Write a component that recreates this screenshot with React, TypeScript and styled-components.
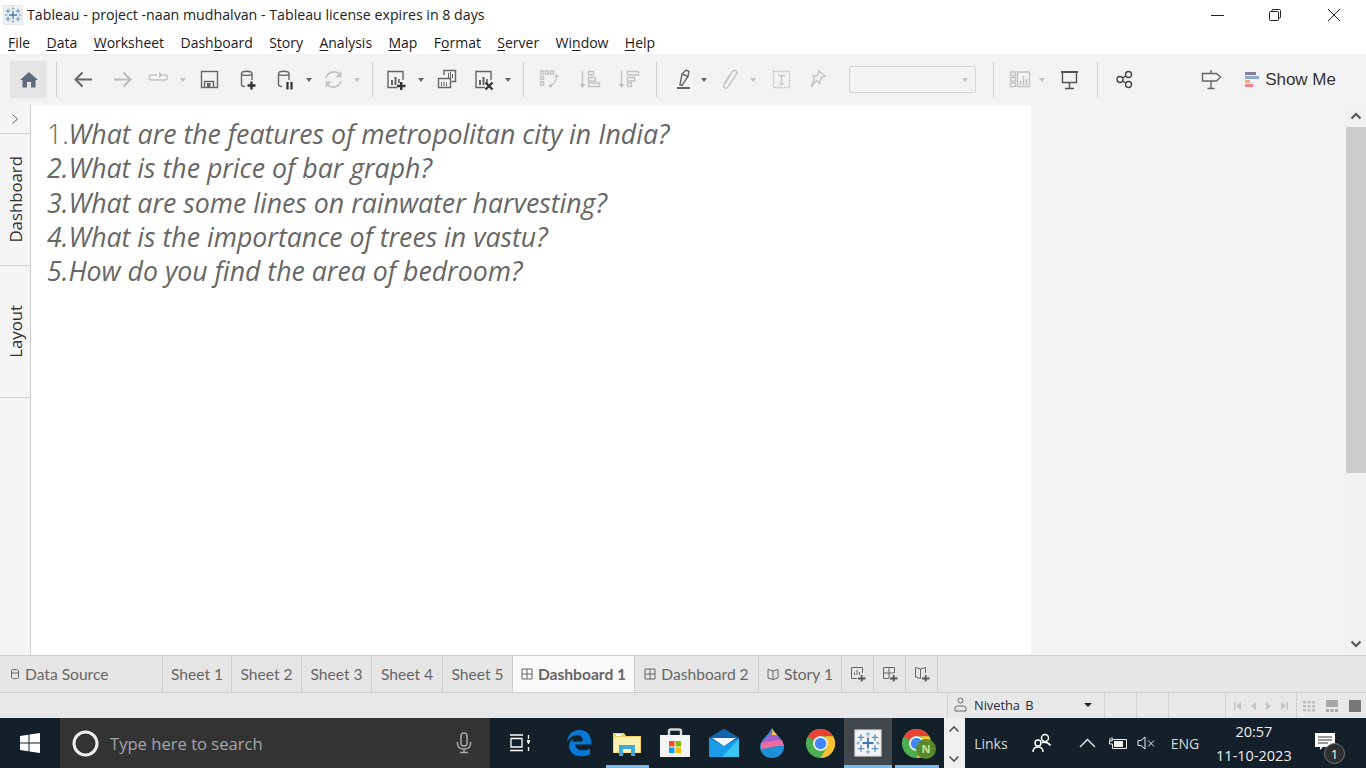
import { createGlobalStyle, styled } from "styled-components";

const Global = createGlobalStyle`
  html, body { margin: 0; padding: 0; height: 100%; overflow: hidden; }
  body { font-family: "Open Sans", "Liberation Sans", sans-serif; background: #fff; }
  * { box-sizing: border-box; }
  svg { display: block; flex: none; }
`;

const Page = styled.div`
  width: 1366px;
  height: 768px;
  display: flex;
  flex-direction: column;
`;

/* title + menu */
const TitleBar = styled.div`
  height: 30px;
  display: flex;
  align-items: center;
  padding-left: 3px;
  background: #fff;
`;
const TitleText = styled.div`
  margin: -2px 0 0 4px;
  font-size: 14.2px;
  color: #222;
  white-space: nowrap;
`;
const WinButtons = styled.div`
  margin-left: auto;
  display: flex;
  padding-right: 3px;
`;
const WinButton = styled.div`
  width: 58.5px;
  height: 30px;
  display: flex;
  align-items: center;
  justify-content: center;
`;
const MenuBar = styled.div`
  height: 24px;
  display: flex;
  gap: 16.4px;
  padding-left: 8px;
  align-items: center;
  background: #fff;
`;
const MenuItem = styled.div`
  font-size: 14px;
  color: #1a1a1a;
  white-space: nowrap;
  u { text-underline-offset: 2px; }
`;

/* toolbar */
const Toolbar = styled.div`
  height: 51px;
  display: flex;
  align-items: center;
  padding: 0 30px 0 10px;
  background: #f3f3f3;
`;
const HomeButton = styled.div`
  width: 37px;
  height: 37px;
  background: #e5e5e5;
  display: flex;
  align-items: center;
  justify-content: center;
`;
const Sep = styled.div<{ $ml?: number; $mr?: number }>`
  width: 1px;
  height: 35px;
  background: #cfcfcf;
  flex: none;
  margin-left: ${(p) => p.$ml ?? 0}px;
  margin-right: ${(p) => p.$mr ?? 0}px;
`;
const Slot = styled.div<{ $w: number }>`
  width: ${(p) => p.$w}px;
  height: 37px;
  flex: none;
  display: flex;
  align-items: center;
  justify-content: center;
`;
const Caret = styled.span<{ $off?: boolean }>`
  display: block;
  flex: none;
  width: 0;
  height: 0;
  border-left: 3px solid transparent;
  border-right: 3px solid transparent;
  border-top: 4px solid ${(p) => (p.$off ? "#c2c2c2" : "#666")};
`;
const Dropdown = styled.div`
  width: 127px;
  height: 27px;
  margin-left: 24px;
  flex: none;
  border: 1px solid #d4d4d4;
  border-radius: 2px;
  background: #f3f3f3;
  display: flex;
  align-items: center;
  justify-content: flex-end;
  padding-right: 7px;
`;
const ToolbarRight = styled.div`
  margin-left: auto;
  display: flex;
  align-items: center;
`;
const ShowMe = styled.div`
  display: flex;
  align-items: center;
  gap: 6px;
  margin-left: 19px;
  font-size: 17px;
  color: #333;
  font-family: "Liberation Sans", sans-serif;
`;

/* main */
const Main = styled.div`
  flex: 1;
  min-height: 0;
  display: flex;
`;
const Rail = styled.div`
  width: 31px;
  flex: none;
  background: #f5f5f5;
  border-right: 1px solid #cdcdcd;
  display: flex;
  flex-direction: column;
`;
const RailToggle = styled.div`
  height: 29px;
  border-bottom: 1px solid #d4d4d4;
  display: flex;
  align-items: center;
  justify-content: center;
`;
const RailTab = styled.div<{ $h: number }>`
  height: ${(p) => p.$h}px;
  border-bottom: 1px solid #d4d4d4;
  display: flex;
  align-items: center;
  justify-content: center;
  span {
    writing-mode: vertical-rl;
    transform: rotate(180deg);
    font-size: 16.8px;
    color: #333;
  }
`;
const Canvas = styled.div`
  width: 1000px;
  flex: none;
  background: #fff;
  padding: 12px 0 0 16px;
`;
const Question = styled.div`
  height: 34.3px;
  line-height: 34.3px;
  font-family: "Open Sans", sans-serif;
  font-style: italic;
  font-size: 26.7px;
  color: #666;
  white-space: nowrap;
  span { font-style: normal; font-weight: 300; }
`;
const SidePanel = styled.div`
  flex: 1;
  background: #f3f3f3;
`;
const Scrollbar = styled.div`
  width: 20px;
  flex: none;
  background: #f1f1f1;
  display: flex;
  flex-direction: column;
`;
const ScrollButton = styled.div`
  height: 22px;
  flex: none;
  display: flex;
  align-items: center;
  justify-content: center;
`;
const ScrollThumb = styled.div`
  height: 346px;
  background: #cdcdcd;
`;
const ScrollTrack = styled.div`
  flex: 1;
`;

/* tabs */
const TabRow = styled.div`
  height: 38px;
  flex: none;
  display: flex;
  background: #e6e6e6;
  border-top: 1px solid #cfcfcf;
  border-bottom: 1px solid #cfcfcf;
`;
const Tab = styled.div<{ $w: number; $active?: boolean }>`
  width: ${(p) => p.$w}px;
  flex: none;
  display: flex;
  align-items: center;
  justify-content: ${(p) => (p.$w > 150 ? "flex-start" : "center")};
  gap: 5px;
  padding-left: ${(p) => (p.$w > 150 ? 10 : 0)}px;
  font-family: "Lato", "Open Sans", sans-serif;
  font-size: 15.6px;
  font-weight: ${(p) => (p.$active ? 700 : 400)};
  color: #666;
  background: ${(p) => (p.$active ? "#fafafa" : "transparent")};
  border-right: 1px solid #cfcfcf;
  white-space: nowrap;
`;

/* status */
const StatusBar = styled.div`
  height: 25px;
  flex: none;
  display: flex;
  justify-content: flex-end;
  background: #e8e8e8;
`;
const StatusCell = styled.div<{ $w: number }>`
  width: ${(p) => p.$w}px;
  flex: none;
  display: flex;
  align-items: center;
  justify-content: center;
  border-left: 1px solid #d2d2d2;
`;
const UserCell = styled(StatusCell)`
  justify-content: flex-start;
  padding: 0 12px 2px 6px;
  font-size: 12.8px;
  color: #1f2a44;
  gap: 7px;
  word-spacing: 2px;
`;
const UserCaret = styled.span`
  margin-left: auto;
  width: 0;
  height: 0;
  border-left: 4px solid transparent;
  border-right: 4px solid transparent;
  border-top: 4px solid #222;
`;
const ViewIcons = styled.div`
  display: flex;
  gap: 11px;
  align-items: center;
`;

/* taskbar */
const Taskbar = styled.div`
  height: 50px;
  flex: none;
  display: flex;
  background: #13202a;
  color: #fff;
  position: relative;
`;
const StartButton = styled.div`
  width: 60px;
  display: flex;
  align-items: center;
  justify-content: center;
`;
const SearchBox = styled.div`
  width: 430px;
  background: #333;
  display: flex;
  align-items: center;
  padding: 0 18px 0 12px;
  color: #a6a6a6;
  font-size: 16.6px;
  gap: 11px;
`;
const MicWrap = styled.div`
  margin-left: auto;
`;
const TaskView = styled.div`
  width: 65px;
  display: flex;
  align-items: center;
  justify-content: flex-start;
  padding-left: 19px;
`;
const AppSlot = styled.div<{ $active?: boolean; $bar?: string }>`
  width: 48.2px;
  flex: none;
  position: relative;
  display: flex;
  align-items: center;
  justify-content: center;
  background: ${(p) => (p.$active ? "#3f474c" : "transparent")};
  &::after {
    content: "";
    display: ${(p) => (p.$bar ? "block" : "none")};
    position: absolute;
    left: ${(p) => (p.$active ? 0 : 3)}px;
    right: ${(p) => (p.$active ? 0 : 2)}px;
    bottom: 0;
    height: 3px;
    background: ${(p) => p.$bar};
  }
`;
const TrayScroll = styled.div`
  width: 21px;
  margin-left: 3.4px;
  flex: none;
  background: #f0f0f0;
  display: flex;
  flex-direction: column;
  align-items: center;
  justify-content: space-between;
  padding: 7px 0 5px;
`;
const Tray = styled.div<{ $w: number }>`
  width: ${(p) => p.$w}px;
  flex: none;
  display: flex;
  align-items: center;
  justify-content: center;
  font-size: 14px;
  color: #d8d8d8;
`;
const Clock = styled.div`
  width: 92px;
  margin-left: 5px;
  flex: none;
  display: flex;
  flex-direction: column;
  align-items: center;
  justify-content: center;
  gap: 5px;
  font-size: 14.5px;
  line-height: 19px;
  color: #eee;
`;
const Badge = styled.div`
  position: absolute;
  left: 24px;
  top: 25px;
  width: 21px;
  height: 21px;
  border-radius: 50%;
  background: #2f2f2f;
  border: 1px solid #777;
  color: #fff;
  font-size: 13px;
  display: flex;
  align-items: center;
  justify-content: center;
`;
const NotifWrap = styled.div`
  position: relative;
  width: 60px;
  display: flex;
  align-items: center;
  padding: 0 0 3px 15px;
`;

const ic = { fill: "none", stroke: "#666", strokeWidth: 1.4 };
const off = { fill: "none", stroke: "#c4c4c4", strokeWidth: 1.4 };

const S = ({ children }: { children: React.ReactNode }) => (
  <svg width="25" height="25" viewBox="0 0 25 25">
    {children}
  </svg>
);

const Cylinder = () => <path {...ic} d="M5.5 6.5C5.5 3.5 16 3.5 16 6.5V13M5.5 6.5C5.5 9 16 9 16 6.5M5.5 6.5V17.5C5.5 19 7 19.5 9 19.5" />;
const BarsBox = ({ x = 4 }: { x?: number }) => (
  <g>
    <path {...ic} d={`M${x + 9} 20.5H${x}V4.5H${x + 15}V13`} />
    <path fill="#666" d={`M${x + 3} 13h2v5h-2zM${x + 6.5} 10h2v8h-2zM${x + 10} 12h1.8v4h-1.8z`} />
  </g>
);

const TableauLogo = ({ size, frame }: { size: number; frame?: boolean }) => {
  const plus = (x: number, y: number, r: number, c: string, w: number) => (
    <path key={`${x}-${y}`} stroke={c} strokeWidth={w} d={`M${x - r} ${y}H${x + r}M${x} ${y - r}V${y + r}`} />
  );
  return (
    <svg width={size} height={size} viewBox="0 0 30 30">
      <rect x="1" y="1" width="28" height="28" fill={frame ? "#f4f4f4" : "#f1f1f1"} stroke="#ddd" />
      {plus(15, 15, 6, "#3f78b0", 2)}
      {plus(7.5, 9, 3.5, "#5b93c7", 1.5)}
      {plus(22.5, 9, 3.5, "#5b93c7", 1.5)}
      {plus(7.5, 21, 3.5, "#5b93c7", 1.5)}
      {plus(22.5, 21, 3.5, "#5b93c7", 1.5)}
      {plus(15, 5.5, 2.5, "#7fa9cf", 1.2)}
      {plus(15, 24.5, 2.5, "#7fa9cf", 1.2)}
      {plus(4.5, 15, 2, "#7fa9cf", 1.2)}
      {plus(25.5, 15, 2, "#7fa9cf", 1.2)}
    </svg>
  );
};

const Chrome = () => (
  <svg width="31" height="31" viewBox="0 0 32 32">
    <circle cx="16" cy="16" r="15" fill="#4caf50" />
    <path fill="#ea4335" d="M3 8.5A15 15 0 0 1 29 8.5L16 8.5C12 8.5 9.5 11 9 13.5Z" />
    <path fill="#fbc02d" d="M29 8.5A15 15 0 0 1 16 31L23 19C24 16 23 11 20 8.5Z" />
    <circle cx="16" cy="16" r="7.6" fill="#fff" />
    <circle cx="16" cy="16" r="6" fill="#4285f4" />
  </svg>
);

export default function App() {
  return (
    <Page>
      <Global />
      <TitleBar>
        <TableauLogo size={20} />
        <TitleText>Tableau - project -naan mudhalvan - Tableau license expires in 8 days</TitleText>
        <WinButtons>
          <WinButton>
            <svg width="14" height="14" viewBox="0 0 14 14"><path stroke="#222" d="M1 7.5H14" /></svg>
          </WinButton>
          <WinButton>
            <svg width="14" height="14" viewBox="0 0 14 14" fill="none" stroke="#222"><rect x="1.5" y="3.5" width="9" height="9" rx="1" /><path d="M4 3.5V2.5Q4 1.5 5 1.5H11.5Q12.5 1.5 12.5 2.5V9Q12.5 10 11.5 10H10.5" /></svg>
          </WinButton>
          <WinButton>
            <svg width="14" height="14" viewBox="0 0 14 14" stroke="#222"><path d="M1 1L13 13M13 1L1 13" /></svg>
          </WinButton>
        </WinButtons>
      </TitleBar>
      <MenuBar>
        <MenuItem><u>F</u>ile</MenuItem>
        <MenuItem><u>D</u>ata</MenuItem>
        <MenuItem><u>W</u>orksheet</MenuItem>
        <MenuItem>Dash<u>b</u>oard</MenuItem>
        <MenuItem>S<u>t</u>ory</MenuItem>
        <MenuItem><u>A</u>nalysis</MenuItem>
        <MenuItem><u>M</u>ap</MenuItem>
        <MenuItem>F<u>o</u>rmat</MenuItem>
        <MenuItem><u>S</u>erver</MenuItem>
        <MenuItem>Wi<u>n</u>dow</MenuItem>
        <MenuItem><u>H</u>elp</MenuItem>
      </MenuBar>

      <Toolbar>
        <HomeButton>
          <svg width="18" height="16" viewBox="0 0 18 16"><path fill="#5d6b7b" d="M9 0L18 8H15.5V15.5H11V10H7V15.5H2.5V8H0Z" /></svg>
        </HomeButton>
        <Sep $ml={9} />
        <Slot $w={52}>
          <S><path fill="none" stroke="#666" strokeWidth="2" d="M21 12.5H5M11.5 5.5L4.5 12.5L11.5 19.5" /></S>
        </Slot>
        <Slot $w={26}>
          <S><path fill="none" stroke="#bdbdbd" strokeWidth="2" d="M4 12.5H20M13.5 5.5L20.5 12.5L13.5 19.5" /></S>
        </Slot>
        <Slot $w={46}>
          <S><path {...off} d="M11 8H6Q3 8 3 10.5T6 13H19Q21.5 13 21.5 10.5T19 8H17" /><path fill="#c4c4c4" d="M13 5l4 3-4 3z" /></S>
        </Slot>
        <Slot $w={4}><Caret $off /></Slot>
        <Slot $w={48}>
          <S><rect {...ic} x="4.5" y="4.5" width="16" height="16" /><path {...ic} d="M7.5 20.5V14.5H16.5V20.5" /><rect x="10" y="16" width="3.5" height="4" fill="#666" /></S>
        </Slot>
        <Slot $w={30}>
          <S><Cylinder /><path stroke="#333" strokeWidth="2.4" d="M11.5 18.5H19.5M15.5 14.5V22.5" /></S>
        </Slot>
        <Slot $w={44}>
          <S><Cylinder /><path stroke="#333" strokeWidth="2.2" d="M14.5 15V22.5M18.5 15V22.5" /></S>
        </Slot>
        <Slot $w={4}><Caret /></Slot>
        <Slot $w={44}>
          <S><path {...off} strokeWidth="1.8" d="M5 11A8 8 0 0 1 19 8M20 14A8 8 0 0 1 6 17" /><path fill="#c4c4c4" d="M20.5 4V10.5H14.5ZM4.5 21V14.5H10.5Z" /></S>
        </Slot>
        <Slot $w={4}><Caret $off /></Slot>
        <Sep $ml={13} />
        <Slot $w={46}>
          <S><BarsBox /><path stroke="#333" strokeWidth="2.4" d="M13 19H21.5M17.2 15V23" /></S>
        </Slot>
        <Slot $w={4}><Caret /></Slot>
        <Slot $w={48}>
          <S><path {...ic} d="M9 8V3.5H20.5V14.5H16.5" /><path {...ic} d="M3.5 11.5H15.5V20.5H3.5Z" /><path stroke="#666" d="M13.5 6V11M15.5 5V11M17.5 7V11M6.5 15V19M9 14.5V19M11.5 15.5V19" /></S>
        </Slot>
        <Slot $w={26}>
          <S><BarsBox /><path stroke="#333" strokeWidth="2.2" d="M13.5 15.5L20.5 22.5M20.5 15.5L13.5 22.5" /></S>
        </Slot>
        <Slot $w={22}><Caret /></Slot>
        <Sep $ml={4} />
        <Slot $w={50}>
          <S><path {...off} d="M3.5 4h3v3h-3zM8.5 4h3v3h-3zM13.5 4h3v3h-3zM3.5 9.5h3v3h-3zM3.5 15h3v3h-3z" /><path {...off} d="M19.5 9Q19.5 16 12.5 19" /><path fill="#c4c4c4" d="M17 10l2.5-3 2.5 3zM14.5 16.5l-3.5 2.5 3.5 2z" /></S>
        </Slot>
        <Slot $w={30}>
          <S><path stroke="#c0c0c0" strokeWidth="1.4" d="M5.5 4V19" /><path fill="#c0c0c0" d="M2.5 17H8.5L5.5 21Z" /><path {...off} d="M11.5 4.5h5v3.5h-5zM11.5 10.5h7v3.5h-7zM11.5 16h11v3.5h-11z" /></S>
        </Slot>
        <Slot $w={48}>
          <S><path stroke="#c0c0c0" strokeWidth="1.4" d="M5.5 4V19" /><path fill="#c0c0c0" d="M2.5 17H8.5L5.5 21Z" /><path {...off} d="M11.5 4.5h11v3.5h-11zM11.5 10.5h7v3.5h-7zM11.5 16h4v3.5h-4z" /></S>
        </Slot>
        <Sep $ml={4} $mr={8} />
        <Slot $w={38}>
          <S><path {...ic} d="M8 18L10 7L14 3L17 4.5L16 9.5L10 18.5Z" /><path {...ic} d="M10 7L16 9.5" /><rect x="5" y="20" width="13" height="2" fill="#666" /></S>
        </Slot>
        <Slot $w={2}><Caret /></Slot>
        <Slot $w={48}>
          <S><path {...off} d="M8 17L15 5Q17 2.5 19 4T18.5 8.5L11 20Q9 22 7.5 21T7 17L13 7.5" /></S>
        </Slot>
        <Slot $w={0}><Caret $off /></Slot>
        <Slot $w={56}>
          <S><rect {...off} strokeDasharray="2 1" x="4.5" y="4.5" width="16" height="16" /><path {...off} d="M9 8.5H16M12.5 8.5V17M10.5 17H14.5" /></S>
        </Slot>
        <Slot $w={16}>
          <S><path {...off} d="M14 4L20 9L16 11L14.5 16.5L11.5 13.5L6 20L9.5 11.5L8 9L12.5 8.5Z" /></S>
        </Slot>
        <Dropdown><Caret $off /></Dropdown>
        <Sep $ml={17} $mr={6} />
        <Slot $w={40}>
          <S><path {...off} d="M2.5 5h5v3.5h-5zM2.5 10.5h5v3.5h-5zM2.5 16h5v3.5h-5zM9.5 5H21.5V19.5H9.5Z" /><path stroke="#c4c4c4" strokeWidth="1.6" d="M12.5 18V14M15.5 18V9M18.5 18V12" /></S>
        </Slot>
        <Slot $w={4}><Caret $off /></Slot>
        <Slot $w={50}>
          <S><path stroke="#555" strokeWidth="2" d="M4 5H21" /><path {...ic} stroke="#555" d="M5.5 5V15.5H19.5V5M12.5 15.5V21.5M8 21.5H17" /></S>
        </Slot>
        <Sep $ml={3} />
        <Slot $w={52}>
          <S><g {...ic} stroke="#444"><circle cx="8" cy="12.5" r="3" /><circle cx="16.5" cy="7.5" r="3" /><circle cx="16.5" cy="17.5" r="3" /><path d="M10.5 11L14 9M10.5 14L14 16" /></g></S>
        </Slot>
        <ToolbarRight>
          <Slot $w={30}>
            <S><path {...ic} d="M3.5 6.5H17.5L21.5 10L17.5 14H3.5ZM12 3V6.5M12 14V21.5M8.5 21.5H15.5" /></S>
          </Slot>
          <ShowMe>
            <svg width="14" height="16" viewBox="0 0 14 16">
              <rect width="11" height="3" fill="#8a7aa0" />
              <rect y="4" width="14" height="3" fill="#8aabd0" />
              <rect y="8" width="5" height="3" fill="#f0b080" />
              <rect y="12" width="8" height="3" fill="#f28090" />
            </svg>
            Show Me
          </ShowMe>
        </ToolbarRight>
      </Toolbar>

      <Main>
        <Rail>
          <RailToggle>
            <svg width="10" height="12" viewBox="0 0 10 12"><path fill="none" stroke="#666" d="M2.5 1.5L7.5 6L2.5 10.5" /></svg>
          </RailToggle>
          <RailTab $h={132}><span>Dashboard</span></RailTab>
          <RailTab $h={132}><span>Layout</span></RailTab>
        </Rail>
        <Canvas>
          <Question><span>1.</span>What are the features of metropolitan city in India?</Question>
          <Question>2.What is the price of bar graph?</Question>
          <Question>3.What are some lines on rainwater harvesting?</Question>
          <Question>4.What is the importance of trees in vastu?</Question>
          <Question>5.How do you find the area of bedroom?</Question>
        </Canvas>
        <SidePanel />
        <Scrollbar>
          <ScrollButton>
            <svg width="12" height="8" viewBox="0 0 12 8"><path fill="none" stroke="#555" strokeWidth="2" d="M1.5 6.5L6 2L10.5 6.5" /></svg>
          </ScrollButton>
          <ScrollThumb />
          <ScrollTrack />
          <ScrollButton>
            <svg width="12" height="8" viewBox="0 0 12 8"><path fill="none" stroke="#555" strokeWidth="2" d="M1.5 1.5L6 6L10.5 1.5" /></svg>
          </ScrollButton>
        </Scrollbar>
      </Main>

      <TabRow>
        <Tab $w={163}>
          <svg width="10" height="12" viewBox="0 0 10 12" fill="none" stroke="#666"><path d="M1.5 3C1.5 1 8.5 1 8.5 3V9.5C8.5 11 1.5 11 1.5 9.5ZM1.5 4C1.5 5.5 8.5 5.5 8.5 4" /></svg>
          Data Source
        </Tab>
        <Tab $w={69}>Sheet 1</Tab>
        <Tab $w={70}>Sheet 2</Tab>
        <Tab $w={70}>Sheet 3</Tab>
        <Tab $w={71}>Sheet 4</Tab>
        <Tab $w={70}>Sheet 5</Tab>
        <Tab $w={122} $active>
          <svg width="12" height="12" viewBox="0 0 12 12" fill="none" stroke="#666"><path d="M1 1H11V11H1ZM6 1V11M1 6H11" /></svg>
          Dashboard 1
        </Tab>
        <Tab $w={124}>
          <svg width="12" height="12" viewBox="0 0 12 12" fill="none" stroke="#666"><path d="M1 1H11V11H1ZM6 1V11M1 6H11" /></svg>
          Dashboard 2
        </Tab>
        <Tab $w={83}>
          <svg width="12" height="12" viewBox="0 0 12 12" fill="none" stroke="#666"><path d="M1 1.5L6 3L11 1.5V10L6 11.5L1 10ZM6 3V11.5" /></svg>
          Story 1
        </Tab>
        <Tab $w={32}>
          <svg width="16" height="16" viewBox="0 0 16 16" fill="none" stroke="#666"><path d="M7 12.5H1.5V1.5H12.5V7M4.5 9V6.5M7 9V4M9.5 9V6" /><path stroke="#555" strokeWidth="1.8" d="M8 12.5H15.5M11.7 9V15.5" /></svg>
        </Tab>
        <Tab $w={32}>
          <svg width="16" height="16" viewBox="0 0 16 16" fill="none" stroke="#666"><path d="M7 12.5H1.5V1.5H12.5V7M7 1.5V12M1.5 7H12" /><path stroke="#555" strokeWidth="1.8" d="M8 12.5H15.5M11.7 9V15.5" /></svg>
        </Tab>
        <Tab $w={32}>
          <svg width="16" height="16" viewBox="0 0 16 16" fill="none" stroke="#666"><path d="M7 12.5L1.5 11V1.5L6.5 3L11.5 1.5V7M6.5 3V12" /><path stroke="#555" strokeWidth="1.8" d="M8 12.5H15.5M11.7 9V15.5" /></svg>
        </Tab>
      </TabRow>

      <StatusBar>
        <UserCell $w={157}>
          <svg width="13" height="15" viewBox="0 0 13 15" fill="none" stroke="#666"><circle cx="6.5" cy="3.5" r="2.5" /><path d="M1 14V11.5Q1 9 3.5 9H9.5Q12 9 12 11.5V14Z" /></svg>
          Nivetha B
          <UserCaret />
        </UserCell>
        <StatusCell $w={32} />
        <StatusCell $w={32} />
        <StatusCell $w={57} />
        <StatusCell $w={71}>
          <svg width="56" height="10" viewBox="0 0 56 10" fill="#c4c4c4">
            <path d="M1 1h1.5v8H1zM8 1v8L3 5zM23 1v8L18 5zM33 1v8l5-4zM48 1v8l5-4zM53.5 1H55v8h-1.5z" />
          </svg>
        </StatusCell>
        <StatusCell $w={70}>
          <ViewIcons>
            <svg width="12" height="12" viewBox="0 0 12 12" fill="#bdbdbd"><path d="M0 1h3v2.5H0zM4.5 1h3v2.5h-3zM9 1h3v2.5H9zM0 5h3v2.5H0zM4.5 5h3v2.5h-3zM9 5h3v2.5H9zM0 9h3v2.5H0zM4.5 9h3v2.5h-3zM9 9h3v2.5H9z" /></svg>
            <svg width="12" height="12" viewBox="0 0 12 12" fill="#a8a8a8"><path d="M0 0h12v7H0zM0 9h3v3H0zM4.5 9h3v3h-3zM9 9h3v3H9z" /></svg>
            <svg width="12" height="12" viewBox="0 0 12 12" fill="#777"><rect width="12" height="12" /></svg>
          </ViewIcons>
        </StatusCell>
      </StatusBar>

      <Taskbar>
        <StartButton>
          <svg width="20" height="20" viewBox="0 0 20 20" fill="#fff"><path d="M0 3L8.5 1.8V9.5H0ZM9.5 1.6L20 0V9.5H9.5ZM0 10.5H8.5V18.2L0 17ZM9.5 10.5H20V20L9.5 18.4Z" /></svg>
        </StartButton>
        <SearchBox>
          <svg width="27" height="27" viewBox="0 0 27 27"><circle cx="13.5" cy="13.5" r="11.5" fill="none" stroke="#eee" strokeWidth="3" /></svg>
          Type here to search
          <MicWrap>
            <svg width="16" height="22" viewBox="0 0 16 22" fill="none" stroke="#aaa" strokeWidth="1.5"><rect x="5" y="1" width="6" height="13" rx="3" /><path d="M1.5 10V11.5Q1.5 17 8 17T14.5 11.5V10M8 17V20.5M4 20.5H12" /></svg>
          </MicWrap>
        </SearchBox>
        <TaskView>
          <svg width="22" height="18" viewBox="0 0 22 18" fill="none" stroke="#fff" strokeWidth="1.3"><path d="M1 1H14M2 4.5H13V13H2ZM1 16.5H14M19.5 1V5M19.5 8V10M19.5 13V17" /><rect x="18" y="6" width="3" height="2.5" fill="#fff" stroke="none" /></svg>
        </TaskView>
        <AppSlot>
          <svg width="26" height="28" viewBox="0 0 26 28"><path fill="#0a78d7" d="M1 13C2 5 7 1 13.5 1C21 1 25.5 6 25.5 15.5H9C9.5 21 17 23.5 24 19.5V25.5C15 29.5 3.5 27 3 17C3.2 13 5.5 10 9 8.5C7 10 6.5 11.5 6.3 12.5H17C17 8 14 6 11 6C7 6 3.5 9 1 13Z" /></svg>
        </AppSlot>
        <AppSlot $bar="#76b9ed">
          <svg width="28" height="25" viewBox="0 0 28 25">
            <path fill="#f6cf65" d="M0 2H11L13 5H28V22H0Z" />
            <path fill="#fff0b3" d="M1 6H27V21.5H1Z" />
            <path fill="#fff" d="M3 3H8V5H3Z" />
            <path fill="#3fa9d9" d="M6 14H22V25H18V18H10V25H6Z" />
          </svg>
        </AppSlot>
        <AppSlot>
          <svg width="30" height="30" viewBox="0 0 30 30">
            <path fill="none" stroke="#d8d8d8" strokeWidth="2.4" d="M9 8V3Q9 1.5 11 1.5H19Q21 1.5 21 3V8" />
            <path fill="#f4f4f4" d="M0 7H30V29H0Z" />
            <rect x="9" y="13" width="5.5" height="5.5" fill="#f25022" />
            <rect x="15.5" y="13" width="5.5" height="5.5" fill="#7fba00" />
            <rect x="9" y="19.5" width="5.5" height="5.5" fill="#00a4ef" />
            <rect x="15.5" y="19.5" width="5.5" height="5.5" fill="#ffb900" />
          </svg>
        </AppSlot>
        <AppSlot>
          <svg width="30" height="28" viewBox="0 0 30 28">
            <path fill="#1a9be6" d="M0 9L15 0L30 9V28H0Z" />
            <path fill="#0f63ad" d="M0 9L15 0L30 9L15 17Z" />
            <path fill="#f1f6fa" d="M3 9H27L15 17Z" />
            <path fill="#38c6f4" d="M30 10V28H13Z" />
          </svg>
        </AppSlot>
        <AppSlot>
          <svg width="24" height="30" viewBox="0 0 24 30">
            <path fill="#1e90d8" d="M12 0C14 5 24 12 24 19A12 11 0 0 1 0 19C0 12 8 8 12 0Z" />
            <path fill="#a45fc9" d="M10 5C8 10 2 12 1 17C8 17 17 14 21 11C18 9 16 6 14 3Z" />
            <path fill="#f06ba0" d="M1 15C8 14 15 12 22 12L24 18C15 17 8 21 1 21Z" />
            <path fill="#ffc83d" d="M12 0C13 3 15 5 17 7L12 7C13 5 12 3 12 0Z" />
          </svg>
        </AppSlot>
        <AppSlot><Chrome /></AppSlot>
        <AppSlot $active $bar="#76b9ed"><TableauLogo size={28} frame /></AppSlot>
        <AppSlot $bar="#76b9ed">
          <Chrome />
          <svg width="20" height="20" viewBox="0 0 20 20" style={{ position: "absolute", left: 24, top: 21 }}>
            <circle cx="10" cy="10" r="10" fill="#5a8a2c" />
            <text x="10" y="14" fontSize="11" fontWeight="700" fill="#c6e39c" textAnchor="middle" fontFamily="Open Sans">N</text>
          </svg>
        </AppSlot>
        <TrayScroll>
          <svg width="12" height="8" viewBox="0 0 12 8"><path fill="none" stroke="#555" strokeWidth="1.6" d="M1.5 6.5L6 2L10.5 6.5" /></svg>
          <svg width="12" height="8" viewBox="0 0 12 8"><path fill="none" stroke="#555" strokeWidth="1.6" d="M1.5 1.5L6 6L10.5 1.5" /></svg>
        </TrayScroll>
        <Tray $w={52}>Links</Tray>
        <Tray $w={50}>
          <svg width="20" height="20" viewBox="0 0 20 20" fill="none" stroke="#fff" strokeWidth="1.5"><circle cx="13" cy="5" r="3.5" /><circle cx="6" cy="10" r="3" /><path d="M1 19Q1 14 6 14T11 19M10 9.5Q15 8 18.5 12.5" /></svg>
        </Tray>
        <Tray $w={42}>
          <svg width="17" height="10" viewBox="0 0 17 10" fill="none" stroke="#eee" strokeWidth="1.3"><path d="M1 9L8.5 1.5L16 9" /></svg>
        </Tray>
        <Tray $w={18}>
          <svg width="20" height="14" viewBox="0 0 20 14" fill="none" stroke="#eee"><path d="M4.5 3.5H18.5V12.5H4.5V8H1.5V5H4.5" /><rect x="6" y="5" width="9" height="6" fill="#eee" stroke="none" /><path d="M2 2V5M4 1V5" /></svg>
        </Tray>
        <Tray $w={40}>
          <svg width="19" height="14" viewBox="0 0 19 14" fill="none" stroke="#eee"><path d="M1 4.5H4L8 1V13L4 9.5H1ZM11 4.5L17 10.5M17 4.5L11 10.5" /></svg>
        </Tray>
        <Tray $w={36}>ENG</Tray>
        <Clock>
          <div>20:57</div>
          <div>11-10-2023</div>
        </Clock>
        <NotifWrap>
          <svg width="20" height="18" viewBox="0 0 20 18"><path fill="#fff" d="M0 0H20V14H8L5 17V14H0Z" /><path stroke="#333" d="M3 4H17M3 7H17M3 10H13" /></svg>
          <Badge>1</Badge>
        </NotifWrap>
      </Taskbar>
    </Page>
  );
}
